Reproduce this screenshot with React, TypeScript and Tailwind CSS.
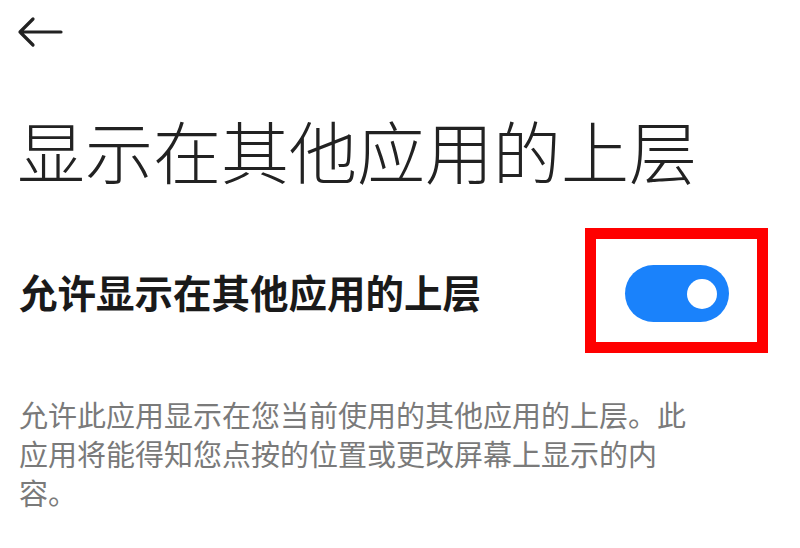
import React from "react";

// overlay permission page
const App = () => {
  return (
    <div
      className="w-[800px] h-[548px] bg-white overflow-hidden flex flex-col pl-[17px]"
      style={{fontFamily: '"Noto Sans CJK SC", "Noto Sans", sans-serif'}}>
      {/* back */}
      <div className="h-[64px] flex items-center">
        <svg width="46" height="32" viewBox="0 0 46 32" fill="none" className="text-[#222]">
          <path d="M3 16H44M3 16L16 3M3 16L16 29" stroke="currentColor" strokeWidth="3.2" strokeLinecap="round" strokeLinejoin="round" />
        </svg>
      </div>

      {/* title */}
      <h1 className="mt-[46px] text-[68px] leading-[80px] font-light text-[#222]">
        显示在其他应用的上层
      </h1>

      {/* switch row */}
      <div className="mt-[38px] flex items-center justify-between pr-[32px]">
        <span className="text-[38.5px] font-bold text-[#1a1a1a] leading-[50px] pl-[2px]">允许显示在其他应用的上层</span>
        <div className="border-[11px] border-[#ff0000] w-[183px] h-[125px] flex items-center justify-center">
          <div className="mt-[6px] w-[104px] h-[57px] rounded-full bg-[#1a82fb] flex items-center justify-end pr-[12px]">
            <div className="w-[30px] h-[30px] rounded-full bg-white" />
          </div>
        </div>
      </div>

      {/* description */}
      <p className="mt-[42px] w-[690px] text-[29px] leading-[39px] text-[#7a7a7a] pl-[2px]">
        允许此应用显示在您当前使用的其他应用的上层。此应用将能得知您点按的位置或更改屏幕上显示的内容。
      </p>
    </div>
  );
};

export default App;
